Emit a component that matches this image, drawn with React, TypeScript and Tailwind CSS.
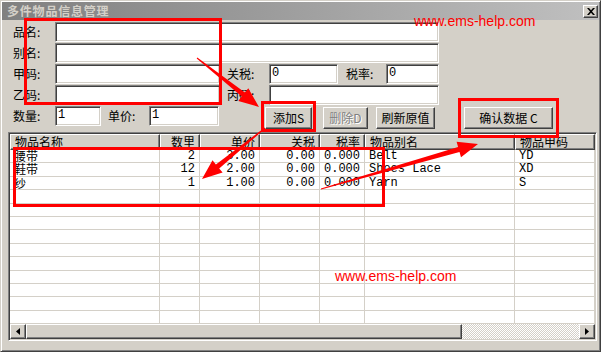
import React from 'react'

const font = { fontFamily: '"Noto Sans CJK SC", "Liberation Sans", sans-serif' }

const sunken =
  'bg-white border border-t-[#808080] border-l-[#808080] border-b-white border-r-white shadow-[inset_1px_1px_0_#404040,inset_-1px_-1px_0_#d4d0c8] px-[2px] text-[12px] leading-[16px] font-["Liberation_Mono",monospace]'

const raised =
  'bg-[#d4d0c8] border border-t-white border-l-white border-b-[#404040] border-r-[#404040] shadow-[inset_-1px_-1px_0_#808080]'

const columns = [
  { title: '物品名称', w: 150, align: 'left' },
  { title: '数里', w: 40, align: 'right' },
  { title: '单价', w: 60, align: 'right' },
  { title: '关税', w: 60, align: 'right' },
  { title: '税率', w: 45, align: 'right' },
  { title: '物品别名', w: 150, align: 'left' },
  { title: '物品甲码', w: 80, align: 'left' },
]

const rows = [
  ['腰带', '2', '3.00', '0.00', '0.000', 'Belt', 'YD'],
  ['鞋带', '12', '2.00', '0.00', '0.000', 'Shoes Lace', 'XD'],
  ['纱', '1', '1.00', '0.00', '0.000', 'Yarn', 'S'],
]

function arrow(x1: number, y1: number, x2: number, y2: number, head = 20, hw = 8, sw = 2.6) {
  const dx = x2 - x1
  const dy = y2 - y1
  const len = Math.sqrt(dx * dx + dy * dy)
  const ux = dx / len
  const uy = dy / len
  const px = -uy
  const py = ux
  const bx = x2 - ux * head
  const by = y2 - uy * head
  const pts = [
    [x1 + px * 0.5, y1 + py * 0.5],
    [bx + px * sw, by + py * sw],
    [bx + px * hw, by + py * hw],
    [x2, y2],
    [bx - px * hw, by - py * hw],
    [bx - px * sw, by - py * sw],
    [x1 - px * 0.5, y1 - py * 0.5],
  ]
  return pts.map((p) => p.map((v) => v.toFixed(1)).join(',')).join(' ')
}

function Label({ text, w }: { text: string; w: number }) {
  return (
    <div className="text-[12px] leading-[20px] text-black shrink-0" style={{ width: w }}>
      {text}
    </div>
  )
}

export default function App() {
  return (
    <div
      className="relative w-[601px] h-[352px] overflow-hidden bg-[#d4d0c8] border border-t-[#d4d0c8] border-l-[#d4d0c8] border-r-[#404040] border-b-[#404040] shadow-[inset_1px_1px_0_#ffffff,inset_-1px_-1px_0_#808080]"
      style={font}
    >
      {/* title bar */}
      <div className="mx-[1px] mt-[1px] h-[18px] flex items-center justify-between bg-gradient-to-r from-[#808080] to-[#c0c0c0] pl-[5px] pr-[1px]">
        <span className="text-[12px] font-bold text-[#d4d0c8] tracking-[0.8px] leading-[16px]">多件物品信息管理</span>
        <div className={`${raised} w-[15px] h-[13px] flex items-center justify-center`}>
          <svg width="8" height="7" viewBox="0 0 8 7">
            <path d="M0 0h2l2 2.2L6 0h2L5 3.5 8 7H6L4 4.8 2 7H0l3-3.5z" fill="#000" />
          </svg>
        </div>
      </div>

      {/* form */}
      <div className="flex flex-col gap-[1px] pl-[12px] mt-[2px]">
        <div className="flex h-[20px]">
          <Label text="品名:" w={42} />
          <div className={`${sunken} w-[384px] h-[20px]`} />
        </div>
        <div className="flex h-[20px]">
          <Label text="别名:" w={42} />
          <div className={`${sunken} w-[384px] h-[20px]`} />
        </div>
        <div className="flex h-[20px]">
          <Label text="甲码:" w={42} />
          <div className={`${sunken} w-[165px] h-[20px]`} />
          <div className="w-[7px]" />
          <Label text="关税:" w={42} />
          <div className={`${sunken} w-[69px] h-[20px]`}>0</div>
          <div className="w-[8px]" />
          <Label text="税率:" w={40} />
          <div className={`${sunken} w-[53px] h-[20px]`}>0</div>
        </div>
        <div className="flex h-[20px]">
          <Label text="乙码:" w={42} />
          <div className={`${sunken} w-[165px] h-[20px]`} />
          <div className="w-[7px]" />
          <Label text="丙码:" w={42} />
          <div className={`${sunken} w-[170px] h-[20px]`} />
        </div>
        <div className="flex h-[20px]">
          <Label text="数量:" w={42} />
          <div className={`${sunken} w-[46px] h-[20px]`}>1</div>
          <div className="w-[7px]" />
          <Label text="单价:" w={41} />
          <div className={`${sunken} w-[70px] h-[20px]`}>1</div>
          <div className="w-[46px]" />
          <button className={`${raised} w-[47px] h-[22px] mt-[1px] text-[12px] leading-[18px] text-black`}>添加S</button>
          <div className="w-[11px]" />
          <button className={`${raised} w-[45px] h-[22px] mt-[1px] text-[12px] leading-[18px] text-[#808080] [text-shadow:1px_1px_0_#ffffff]`}>删除D</button>
          <div className="w-[8px]" />
          <button className={`${raised} w-[59px] h-[22px] mt-[1px] text-[12px] leading-[18px] text-black`}>刷新原值</button>
          <div className="w-[29px]" />
          <button className={`${raised} w-[89px] h-[22px] mt-[1px] text-[12px] leading-[18px] text-black`}>确认数据 C</button>
        </div>
      </div>

      {/* grid */}
      <div className="mt-[6px] ml-[7px] w-[589px] h-[209px] flex flex-col border border-t-[#808080] border-l-[#808080] border-b-white border-r-white shadow-[inset_1px_1px_0_#404040,inset_-1px_-1px_0_#d4d0c8] p-[1px]">
        <div className="flex h-[16px] shrink-0">
          {columns.map((c) => (
            <div
              key={c.title}
              className={`${raised} h-[16px] px-[4px] text-[12px] leading-[14px] text-black whitespace-nowrap ${c.align === 'right' ? 'text-right' : 'text-left'}`}
              style={{ width: c.w }}
            >
              {c.title}
            </div>
          ))}
          <div className="flex-1 bg-[#d4d0c8]" />
        </div>
        <div className="flex-1 bg-white overflow-hidden">
          {Array.from({ length: 14 }).map((_, r) => (
            <div key={r} className="flex h-[13.4px]">
              {columns.map((c, ci) => (
                <div
                  key={ci}
                  className={`h-full border-r border-b border-[#d4d0c8] px-[4px] text-[12px] leading-[12px] text-black whitespace-nowrap ${c.align === 'right' ? 'text-right' : 'text-left'} ${ci >= 1 ? 'font-["Liberation_Mono",monospace]' : ''}`}
                  style={{ width: c.w }}
                >
                  {rows[r] ? rows[r][ci] : ''}
                </div>
              ))}
            </div>
          ))}
        </div>
        {/* horizontal scrollbar */}
        <div className="flex h-[15px] shrink-0 bg-[repeating-conic-gradient(#d4d0c8_0%_25%,#ffffff_0%_50%)] bg-[length:2px_2px]">
          <div className={`${raised} w-[16px] h-[15px] flex items-center justify-center`}>
            <svg width="4" height="7" viewBox="0 0 4 7"><path d="M4 0v7L0 3.5z" fill="#000" /></svg>
          </div>
          <div className={`${raised} w-[436px] h-[15px]`} />
          <div className="flex-1" />
          <div className={`${raised} w-[16px] h-[15px] flex items-center justify-center`}>
            <svg width="4" height="7" viewBox="0 0 4 7"><path d="M0 0v7l4-3.5z" fill="#000" /></svg>
          </div>
        </div>
      </div>

      {/* watermarks */}
      <div className="absolute left-[413px] top-[10px] text-[14px] text-[#ff0000] font-['Liberation_Sans',sans-serif]">www.ems-help.com</div>
      <div className="absolute left-[334px] top-[265px] text-[14px] text-[#ff0000] font-['Liberation_Sans',sans-serif]">www.ems-help.com</div>

      {/* annotation boxes */}
      <div className="absolute left-[23px] top-[17px] w-[198px] h-[87px] border-[3px] border-[#ff0000]" />
      <div className="absolute left-[260px] top-[100px] w-[55px] h-[31px] border-[3px] border-[#ff0000]" />
      <div className="absolute left-[457px] top-[97px] w-[101px] h-[40px] border-[3px] border-[#ff0000]" />
      <div className="absolute left-[12px] top-[146px] w-[372px] h-[60px] border-[3px] border-[#ff0000]" />

      {/* annotation arrows */}
      <svg className="absolute left-0 top-0" width="601" height="352">
        <polygon points={arrow(196, 57, 258, 106)} fill="#ff0000" />
        <polygon points={arrow(264, 127, 201, 178)} fill="#ff0000" />
        <polygon points={arrow(320, 188, 477, 143)} fill="#ff0000" />
      </svg>
    </div>
  )
}
